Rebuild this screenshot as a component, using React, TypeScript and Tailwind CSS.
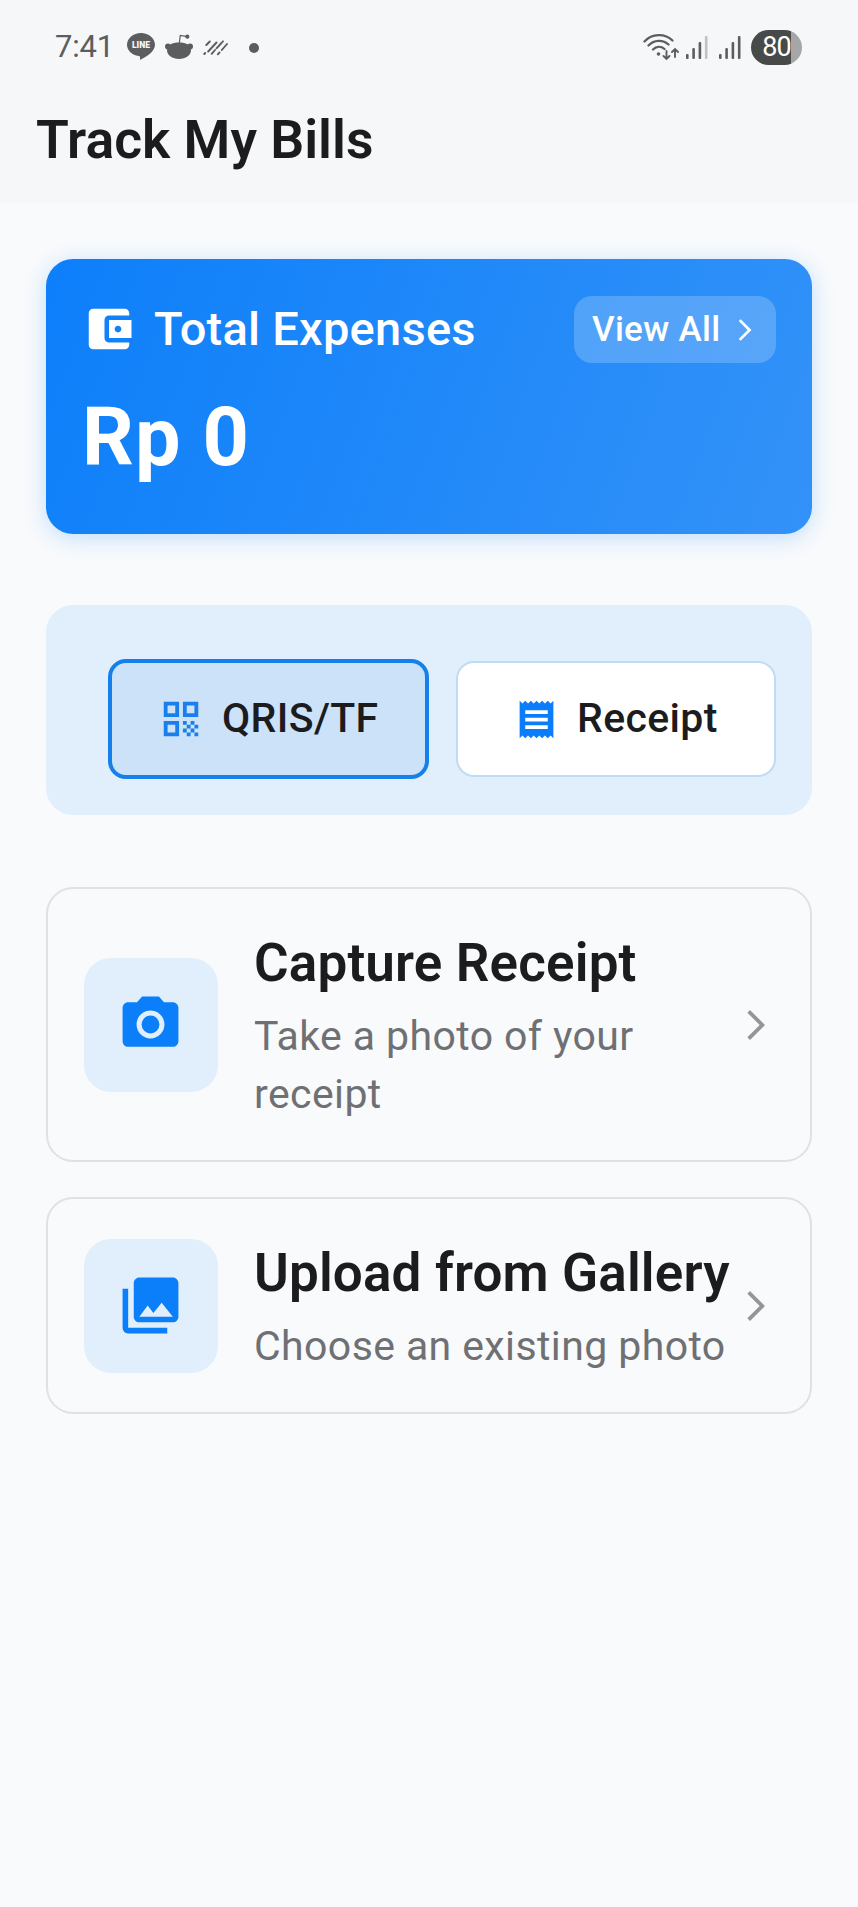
import type { ReactNode } from "react";
import {
  MdAccountBalanceWallet,
  MdArrowForwardIos,
  MdCameraAlt,
  MdPhotoLibrary,
  MdQrCode,
  MdReceipt,
} from "react-icons/md";

function StatusBar() {
  return (
    <div className="flex h-[94px] items-center pl-[55px] pr-[56px] text-[#5c5d5f]">
      <span className="w-[72px] text-[31px] leading-[38px] tracking-[-0.2px]">7:41</span>
      <svg className="h-[28px] w-[28px]" viewBox="0 0 28 28">
        <path d="M14 0C6.3 0 0 5.2 0 11.8c0 5.700 4.900 10.400 11.700 11.300 1.300.3 1.600.8 1.300 3.900 4-2 15-7.500 15-15.200C28 5.200 21.700 0 14 0Z" fill="currentColor" />
        <text x="14" y="15" textAnchor="middle" fontFamily="Roboto, sans-serif" fontWeight="900" fontSize="8.600" fill="#f5f7fa">LINE</text>
      </svg>
      <svg className="ml-[10px] h-[26px] w-[28px]" viewBox="0 0 28 26" fill="currentColor">
        <circle cx="3" cy="12.500" r="3" />
        <circle cx="25" cy="12.500" r="3" />
        <path d="M2 16c0-5 5-7.500 12-7.500S26 11 26 16c0 5.500-5.500 9-12 9S2 21.500 2 16Z" />
        <path d="M14.300 9 15.300 1.500 21 2.300" fill="none" stroke="currentColor" strokeWidth="1.200" />
        <circle cx="22.300" cy="2.700" r="2.100" />
      </svg>
      <svg className="ml-[10px] mt-[2px] h-[16px] w-[26px]" viewBox="0 0 26 16" fill="none" stroke="currentColor" strokeWidth="1.900" strokeLinecap="round">
        <path d="M1.300 14 2.200 13M3.300 5 6.800 1.500M5.200 11.500 13.500 2.500M8.700 13.800 12 10M13.500 8.300 18.500 3M14.800 14.300 16.500 12.500M18.800 10 24 4M19.500 1.800 20 1.300" />
      </svg>
      <span className="ml-[20px] mt-px h-[10px] w-[10px] rounded-full bg-[#5c5d5f]" />
      <div className="ml-auto flex items-center">
        <svg className="h-[28px] w-[36px]" viewBox="0 0 36 28" fill="none" stroke="currentColor" strokeWidth="2.300" strokeLinecap="round">
          <path d="M1.500 8.500C9 .2 22 .2 29.500 7.500M5.500 12.500C11 6.500 20 6.500 25.500 11.500M10 16.500c3.300-3.200 8-3.500 11.500-.5" />
          <circle cx="15.500" cy="21" r="1.800" fill="currentColor" stroke="none" />
          <path d="M23.500 18v8M20.500 23l3 3 3-3M32 24v-8M29 19l3-3 3 3" strokeWidth="1.900" />
        </svg>
        <svg className="ml-[7px] mt-[2px] h-[24px] w-[22px]" viewBox="0 0 22 24" fill="currentColor">
          <rect x="0" y="18" width="2.600" height="5" rx="1" />
          <rect x="6.300" y="12" width="2.600" height="11" rx="1" />
          <rect x="12.600" y="6" width="2.600" height="17" rx="1" />
          <rect x="18.900" y="0" width="2.600" height="23" rx="1" opacity="0.350" />
        </svg>
        <svg className="ml-[11px] mt-[2px] h-[24px] w-[22px]" viewBox="0 0 22 24" fill="currentColor">
          <rect x="0" y="18" width="2.600" height="5" rx="1" />
          <rect x="6.300" y="12" width="2.600" height="11" rx="1" />
          <rect x="12.600" y="6" width="2.600" height="17" rx="1" />
          <rect x="18.900" y="0" width="2.600" height="23" rx="1" />
        </svg>
        <div className="ml-[10px] flex h-[35px] w-[51px] items-center justify-center rounded-full bg-linear-to-r from-[#484a4a] from-78% to-[#a5a6a7] to-78% text-[27px] tracking-[-1px] text-white">
          80
        </div>
      </div>
    </div>
  );
}

function ExpensesCard() {
  return (
    <section className="flex h-[275px] flex-col rounded-[27px] bg-linear-[110deg] from-[#0d7ffa] to-[#3392f8] px-[36px] pt-[37px] text-white shadow-[0_4px_22px_rgba(10,126,250,0.22)]">
      <div className="flex h-[67px] items-center">
        <MdAccountBalanceWallet className="mb-px size-[54px]" />
        <h2 className="mb-[2px] ml-[18px] text-[47px] leading-[56px] font-medium tracking-[0.250px] whitespace-nowrap">Total Expenses</h2>
        <button className="ml-auto flex h-[67px] w-[202px] items-center justify-between rounded-[18px] bg-white/20 px-[18px] text-[35px] font-medium tracking-[0.300px] whitespace-nowrap">
          <span className="pt-[2px]">View All</span>
          <MdArrowForwardIos className="size-[26px]" />
        </button>
      </div>
      <p className="mt-[27px] text-[81px] leading-[96px] font-bold tracking-[1px]">Rp 0</p>
    </section>
  );
}

function TypeSelector() {
  return (
    <section className="mt-[71px] flex h-[210px] items-center justify-end gap-[27px] rounded-[27px] bg-[#e1eefb] pt-[18px] pr-[36px]">
      <button className="flex h-[120px] w-[321px] items-center rounded-[18px] border-4 border-[#1680ea] bg-[#cbe2f9] pl-[46px] text-[41px] font-medium tracking-[0.350px] text-[#1c1c1e]">
        <MdQrCode className="size-[46px] text-[#1a7fec]" />
        <span className="ml-[18px]">QRIS/TF</span>
      </button>
      <button className="flex h-[116px] w-[320px] items-center rounded-[18px] border-2 border-[#bfdcf7] bg-white pl-[56px] text-[41px] font-medium tracking-[0.350px] text-[#1c1c1e]">
        <MdReceipt className="size-[45px] text-[#0b7dfa]" />
        <span className="ml-[18px]">Receipt</span>
      </button>
    </section>
  );
}

type ActionProps = { icon: ReactNode; title: string; text: ReactNode; className: string };

function ActionCard({ icon, title, text, className }: ActionProps) {
  return (
    <button className={`flex w-full items-center rounded-[27px] border-2 border-[#dfe1e4] px-[36px] text-left ${className}`}>
      <span className="flex size-[134px] shrink-0 items-center justify-center rounded-[27px] bg-[#e1eefb] pr-px text-[#0b7ffa]">{icon}</span>
      <span className="ml-[36px] flex flex-1 flex-col gap-[6px] whitespace-nowrap">
        <span className="text-[53px] leading-[75px] font-semibold tracking-[0.150px] text-[#1c1c1e]">{title}</span>
        <span className="text-[41px] leading-[58.500px] tracking-[0.400px] text-[#6f7073]">{text}</span>
      </span>
      <MdArrowForwardIos className="-ml-9 size-[36px] shrink-0 text-[#949597]" />
    </button>
  );
}

export default function App() {
  return (
    <div className="h-[1907px] w-[858px] overflow-hidden bg-[#f8fafc] font-[Roboto,sans-serif]">
      <div className="h-[203px] bg-[#f5f7f9]">
        <StatusBar />
        <header className="flex h-[92px] items-center pl-[36px]">
          <h1 className="text-[53.500px] leading-[62px] font-semibold text-[#1c1c1e]">Track My Bills</h1>
        </header>
      </div>
      <main className="px-[46px] pt-[56px]">
        <ExpensesCard />
        <TypeSelector />
        <div className="mt-[72px] flex flex-col gap-[35px]">
          <ActionCard
            className="h-[275px]"
            icon={<MdCameraAlt className="size-[67px]" />}
            title="Capture Receipt"
            text={<>Take a photo of your<br />receipt</>}
          />
          <ActionCard
            className="h-[217px]"
            icon={<MdPhotoLibrary className="size-[67px]" />}
            title="Upload from Gallery"
            text="Choose an existing photo"
          />
        </div>
      </main>
    </div>
  );
}
